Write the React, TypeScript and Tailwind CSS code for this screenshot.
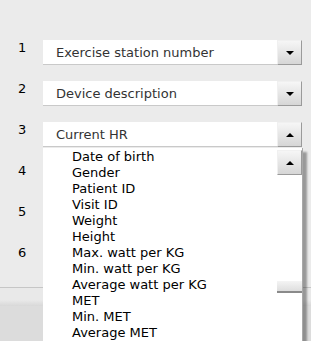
import React from 'react';

const rows = [
    { n: 1, label: 'Exercise station number', open: false },
    { n: 2, label: 'Device description', open: false },
    { n: 3, label: 'Current HR', open: true },
    { n: 4, label: '', open: false },
    { n: 5, label: '', open: false },
    { n: 6, label: '', open: false },
];

const options = [
    'Date of birth',
    'Gender',
    'Patient ID',
    'Visit ID',
    'Weight',
    'Height',
    'Max. watt per KG',
    'Min. watt per KG',
    'Average watt per KG',
    'MET',
    'Min. MET',
    'Average MET',
];

function Arrow({ up }: { up?: boolean }) {
    return (
        <svg width="8" height="4" viewBox="0 0 8 4" className="block">
            {up ? <path d="M0 4 L4 0 L8 4 Z" fill="#000" /> : <path d="M0 0 L8 0 L4 4 Z" fill="#000" />}
        </svg>
    );
}

function ArrowButton({ up, className = '' }: { up?: boolean; className?: string }) {
    return (
        <div className={`w-[25px] h-[25px] flex items-center justify-center bg-gradient-to-b from-[#f6f6f6] to-[#d6d6d6] border-l border-t border-l-[#f0f0f0] border-t-[#f0f0f0] border-r border-b border-r-[#9a9a9a] border-b-[#9a9a9a] ${className}`}>
            <Arrow up={up} />
        </div>
    );
}

export default function App() {
    return (
        <div className="min-h-screen w-[311px] overflow-hidden bg-[#ebebeb] flex flex-col relative" style={{ fontFamily: '"DejaVu Sans", Verdana, sans-serif' }}>
            {/* Field rows */}
            <div className="pt-[40px] flex flex-col gap-[16px]">
                {rows.map((row) => (
                    <div key={row.n} className="flex items-start">
                        <div className="w-[43px] pl-[18px] text-[13px] leading-[16px] text-black">{row.n}</div>
                        <div className="flex w-[259px] h-[25px]">
                            <div className="flex-1 bg-white border-b border-[#c9c9c9] pl-[13px] text-[13px] leading-[25px] text-[#333]">
                                {row.label}
                            </div>
                            <ArrowButton up={row.open} />
                        </div>
                    </div>
                ))}
            </div>

            {/* Footer */}
            <div className="mt-[17px] flex-1 flex flex-col border-t border-[#c6c6c6]">
                <div className="h-[12px] bg-[#e9e9e9]"></div>
                <div className="h-[6px] bg-gradient-to-b from-[#e9e9e9] to-[#d8d8d8]"></div>
                <div className="flex-1 bg-[#dcdcdc]"></div>
            </div>

            {/* Open dropdown list */}
            <div className="absolute left-[43px] top-[148px] w-[260px] h-[220px] bg-white border-r border-[#a8a8a8] shadow-[4px_4px_2px_rgba(0,0,0,0.35)] flex">
                <div className="flex-1 pl-[29px] pt-[1px] text-[13px] leading-[16px] text-black">
                    {options.map((o) => (
                        <div key={o} className="whitespace-nowrap">{o}</div>
                    ))}
                </div>
                <div className="w-[25px] flex flex-col pt-[2px]">
                    <ArrowButton up className="h-[23px]" />
                    <div className="h-[106px]"></div>
                    <div className="h-[12px] bg-gradient-to-b from-[#f4f4f4] to-[#dedede] border-b-2 border-[#8a8a8a]"></div>
                </div>
            </div>
        </div>
    );
}
